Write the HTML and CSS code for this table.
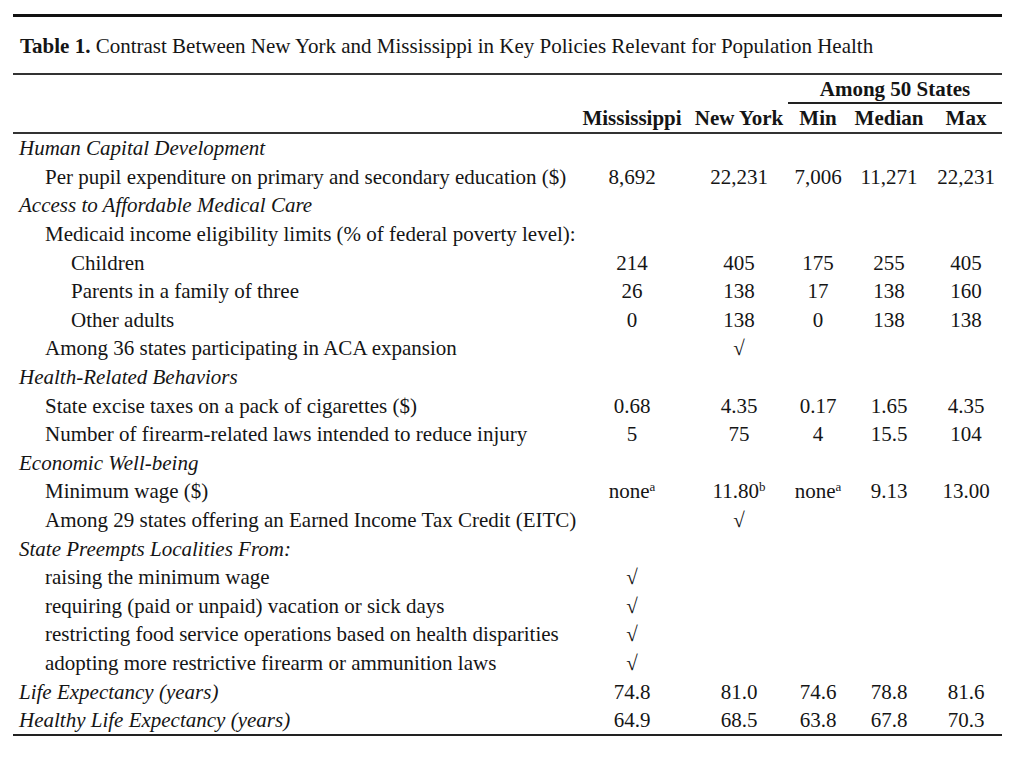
FILE: index.html
```html
<!DOCTYPE html>
<html>
<head>
<meta charset="utf-8">
<link rel="stylesheet" href="styles.css">
</head>
<body>
<div class="page">
  <div class="title"><span class="title-text"><b>Table 1.</b> Contrast Between New York and Mississippi in Key Policies Relevant for Population Health</span></div>
  <table class="tbl">
    <colgroup>
      <col class="c-label"><col class="c-ms"><col class="c-ny"><col class="c-min"><col class="c-med"><col class="c-max">
    </colgroup>
    <thead>
      <tr class="h1">
        <th></th><th></th><th></th>
        <th colspan="3" class="among">Among 50 States</th>
      </tr>
      <tr class="h2">
        <th></th><th>Mississippi</th><th>New York</th><th>Min</th><th>Median</th><th>Max</th>
      </tr>
    </thead>
    <tbody>
      <tr><td class="cat">Human Capital Development</td><td></td><td></td><td></td><td></td><td></td></tr>
      <tr><td class="l1">Per pupil expenditure on primary and secondary education ($)</td><td>8,692</td><td>22,231</td><td>7,006</td><td>11,271</td><td>22,231</td></tr>
      <tr><td class="cat">Access to Affordable Medical Care</td><td></td><td></td><td></td><td></td><td></td></tr>
      <tr><td class="l1">Medicaid income eligibility limits (% of federal poverty level):</td><td></td><td></td><td></td><td></td><td></td></tr>
      <tr><td class="l2">Children</td><td>214</td><td>405</td><td>175</td><td>255</td><td>405</td></tr>
      <tr><td class="l2">Parents in a family of three</td><td>26</td><td>138</td><td>17</td><td>138</td><td>160</td></tr>
      <tr><td class="l2">Other adults</td><td>0</td><td>138</td><td>0</td><td>138</td><td>138</td></tr>
      <tr><td class="l1">Among 36 states participating in ACA expansion</td><td></td><td>√</td><td></td><td></td><td></td></tr>
      <tr><td class="cat">Health-Related Behaviors</td><td></td><td></td><td></td><td></td><td></td></tr>
      <tr><td class="l1">State excise taxes on a pack of cigarettes ($)</td><td>0.68</td><td>4.35</td><td>0.17</td><td>1.65</td><td>4.35</td></tr>
      <tr><td class="l1">Number of firearm-related laws intended to reduce injury</td><td>5</td><td>75</td><td>4</td><td>15.5</td><td>104</td></tr>
      <tr><td class="cat">Economic Well-being</td><td></td><td></td><td></td><td></td><td></td></tr>
      <tr><td class="l1">Minimum wage ($)</td><td>none<sup>a</sup></td><td>11.80<sup>b</sup></td><td>none<sup>a</sup></td><td>9.13</td><td>13.00</td></tr>
      <tr><td class="l1">Among 29 states offering an Earned Income Tax Credit (EITC)</td><td></td><td>√</td><td></td><td></td><td></td></tr>
      <tr><td class="cat">State Preempts Localities From:</td><td></td><td></td><td></td><td></td><td></td></tr>
      <tr><td class="l1">raising the minimum wage</td><td>√</td><td></td><td></td><td></td><td></td></tr>
      <tr><td class="l1">requiring (paid or unpaid) vacation or sick days</td><td>√</td><td></td><td></td><td></td><td></td></tr>
      <tr><td class="l1">restricting food service operations based on health disparities</td><td>√</td><td></td><td></td><td></td><td></td></tr>
      <tr><td class="l1">adopting more restrictive firearm or ammunition laws</td><td>√</td><td></td><td></td><td></td><td></td></tr>
      <tr><td class="cat">Life Expectancy (years)</td><td>74.8</td><td>81.0</td><td>74.6</td><td>78.8</td><td>81.6</td></tr>
      <tr class="last"><td class="cat">Healthy Life Expectancy (years)</td><td>64.9</td><td>68.5</td><td>63.8</td><td>67.8</td><td>70.3</td></tr>
    </tbody>
  </table>
</div>
</body>
</html>
```
FILE: styles.css
```css
html, body {
  margin: 0;
  padding: 0;
  background: #fff;
}
body {
  font-family: "Liberation Serif", "Times New Roman", serif;
  color: #151515;
}
.page {
  width: 989px;
  margin-left: 13px;
  padding-top: 14px;
}
.title {
  border-top: 3px solid #111;
  border-bottom: 2px solid #333;
  height: 61px;
  box-sizing: border-box;
  padding-left: 7px;
  padding-top: 2px;
  display: flex;
  align-items: center;
  font-size: 21px;
}
.tbl {
  width: 989px;
  border-collapse: collapse;
  table-layout: fixed;
  font-size: 21px;
}
.c-label { width: 561px; }
.c-ms { width: 116px; }
.c-ny { width: 98px; }
.c-min { width: 60px; }
.c-med { width: 82px; }
.c-max { width: 72px; }
.tbl th, .tbl td {
  padding: 0;
  text-align: center;
  white-space: nowrap;
}
.tbl th {
  font-weight: bold;
}
.h1 th {
  height: 27px;
  line-height: 24px;
}
.among {
  border-bottom: 2px solid #222;
}
.h2 th {
  height: 28px;
  line-height: 24px;
  border-bottom: 2px solid #333;
}
.tbl tbody td {
  height: 28.6px;
  line-height: 24px;
}
.tbl tbody tr.last td {
  border-bottom: 2px solid #222;
}
.tbl td.cat {
  text-align: left;
  font-style: italic;
  padding-left: 6px;
}
.tbl td.l1 {
  text-align: left;
  padding-left: 32px;
}
.tbl td.l2 {
  text-align: left;
  padding-left: 58px;
}
sup {
  font-size: 13px;
  line-height: 0;
  vertical-align: 7px;
}
```
